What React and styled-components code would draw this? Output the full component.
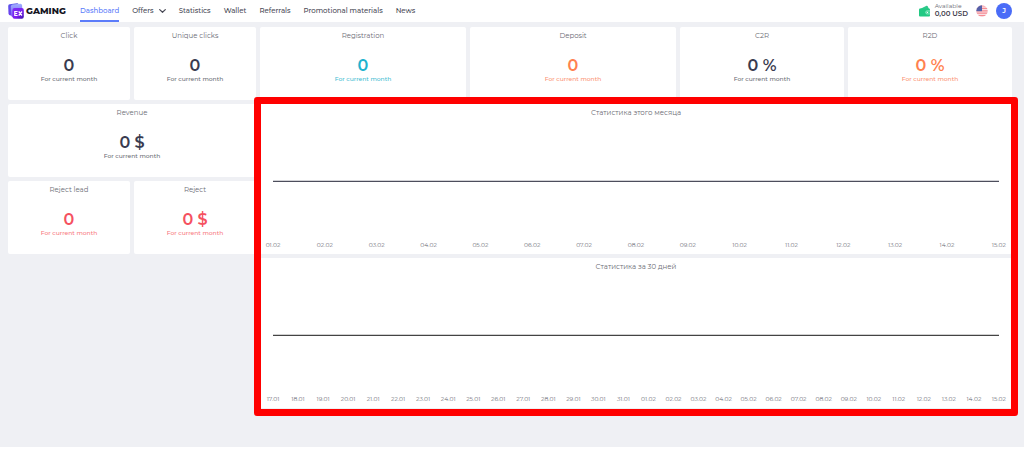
import React from "react";
import styled, { createGlobalStyle } from "styled-components";

const GlobalStyle = createGlobalStyle`
  * { box-sizing: border-box; }
  body {
    margin: 0;
    background: #fff;
    color: #6b6c75;
    font-family: Montserrat, Inter, "Noto Sans", sans-serif;
    font-size: 7px;
    line-height: 10px;
  }
`;

const Header = styled.header`
  display: flex;
  justify-content: space-between;
  height: 22px;
  padding: 0 12px 0 8px;
  background: #fff;
`;

const HeaderSide = styled.div`
  display: flex;
  align-items: center;
  gap: ${(p) => p.$gap}px;
`;

const Logo = styled.a`
  display: flex;
  align-items: center;
  gap: 2px;
  width: 59px;
  height: 20px;
  color: #15151f;
  font-size: 9px;
  font-weight: 800;
  text-decoration: none;
`;

const Nav = styled.nav`
  display: flex;
  gap: 13px;
  height: 22px;
`;

const NavLink = styled.a`
  display: flex;
  align-items: center;
  gap: 5px;
  padding-top: 1px;
  border-bottom: 2px solid ${(p) => (p.$active ? "#5c7cfa" : "transparent")};
  color: ${(p) => (p.$active ? "#5c7cfa" : "#4a4b57")};
  font-weight: 500;
  text-decoration: none;
  white-space: nowrap;
`;

const Balance = styled.div`
  display: flex;
  align-items: center;
  gap: 5px;
  height: 20px;
`;

const BalanceText = styled.div`
  display: flex;
  flex-direction: column;
  padding-bottom: 2px;
  font-size: 6px;
  line-height: 7px;
  white-space: nowrap;

  strong {
    color: #3f404c;
    font-size: 7px;
    font-weight: 600;
  }
`;

const RoundButton = styled.button`
  display: flex;
  align-items: center;
  justify-content: center;
  width: ${(p) => p.$size}px;
  height: ${(p) => p.$size}px;
  padding: 0;
  border: 0;
  border-radius: 50%;
  background: ${(p) => p.$background || "transparent"};
  color: #fff;
  font: inherit;
  font-weight: 600;
`;

const Main = styled.main`
  display: grid;
  grid-template-columns: repeat(24, minmax(0, 1fr));
  gap: 4px;
  align-items: start;
  padding: 5px 12px 38px 8px;
  background: #eff0f4;
`;

const Side = styled.div`
  display: grid;
  grid-column: span 6;
  grid-template-columns: repeat(6, minmax(0, 1fr));
  gap: 4px;
`;

const Card = styled.section`
  display: flex;
  flex-direction: column;
  align-items: center;
  grid-column: span ${(p) => p.$span};
  min-height: 73px;
  padding: 4px 0;
  border-radius: 2px;
  background: #fff;
`;

const Title = styled.h2`
  margin: 0;
  font-size: 7px;
  font-weight: 400;
  line-height: 10px;
`;

const Value = styled.div`
  margin-top: 16px;
  color: ${(p) => p.$color};
  font-size: 16px;
  font-weight: 600;
  line-height: 18px;
`;

const Period = styled.div`
  color: ${(p) => p.$color};
  font-size: 6px;
  font-weight: 500;
  line-height: 8px;
`;

const Charts = styled.div`
  position: relative;
  display: grid;
  grid-column: span 18;
  gap: 4px;
  padding-bottom: 1px;

  &::after {
    content: "";
    position: absolute;
    inset: -7px -6px;
    border: 7px solid #ff0000;
    border-radius: 3px;
    pointer-events: none;
  }
`;

const ChartCard = styled.section`
  display: flex;
  flex-direction: column;
  align-items: center;
  padding: 4px 1px;
  border-radius: 2px;
  background: #fff;
`;

const Plot = styled.div`
  align-self: stretch;
  height: 122px;
  padding: 0 12px;

  svg {
    display: block;
    width: 100%;
    height: 100%;
  }
`;

const Dates = styled.div`
  display: flex;
  justify-content: space-between;
  align-self: stretch;
  font-size: 6px;
`;

const DateLabel = styled.span`
  width: 24px;
  text-align: center;
`;

const tones = {
  dark: ["#3a3b50", "#6b6c75"],
  teal: ["#20b2ce", "#45bdd2"],
  orange: ["#ff814f", "#fb9273"],
  red: ["#f5515f", "#f77880"],
};

const summary = [
  { title: "Click", value: "0", span: 3, tone: "dark" },
  { title: "Unique clicks", value: "0", span: 3, tone: "dark" },
  { title: "Registration", value: "0", span: 5, tone: "teal" },
  { title: "Deposit", value: "0", span: 5, tone: "orange" },
  { title: "C2R", value: "0 %", span: 4, tone: "dark" },
  { title: "R2D", value: "0 %", span: 4, tone: "orange" },
];

const totals = [
  { title: "Revenue", value: "0 $", span: 6, tone: "dark" },
  { title: "Reject lead", value: "0", span: 3, tone: "red" },
  { title: "Reject", value: "0 $", span: 3, tone: "red" },
];

const pad = (n) => String(n).padStart(2, "0");
const february = Array.from({ length: 15 }, (_, i) => `${pad(i + 1)}.02`);
const january = Array.from({ length: 15 }, (_, i) => `${pad(i + 17)}.01`);

function Stat({ title, value, span, tone }) {
  const [strong, soft] = tones[tone];
  return (
    <Card $span={span}>
      <Title>{title}</Title>
      <Value $color={strong}>{value}</Value>
      <Period $color={soft}>For current month</Period>
    </Card>
  );
}

function Chart({ title, dates, color }) {
  return (
    <ChartCard>
      <Title>{title}</Title>
      <Plot>
        <svg viewBox="0 0 100 122" preserveAspectRatio="none" aria-hidden="true">
          <line x1="0" x2="100" y1="63.4" y2="63.4" stroke={color} strokeWidth="1.2" />
        </svg>
      </Plot>
      <Dates>
        {dates.map((d) => (
          <DateLabel key={d}>{d}</DateLabel>
        ))}
      </Dates>
    </ChartCard>
  );
}

function LogoMark() {
  return (
    <svg width="16" height="16" viewBox="0 0 16 16" aria-hidden="true">
      <defs>
        <linearGradient id="back" x1="0" y1="0" x2="0" y2="1">
          <stop offset="0" stopColor="#5a55e8" />
          <stop offset="1" stopColor="#6d3df0" />
        </linearGradient>
        <linearGradient id="middle" x1="0" y1="0" x2="0" y2="1">
          <stop offset="0" stopColor="#9fb0ff" />
          <stop offset="1" stopColor="#7a55f5" />
        </linearGradient>
        <linearGradient id="front" x1="0" y1="0" x2="1" y2="1">
          <stop offset="0" stopColor="#7d2df5" />
          <stop offset="0.6" stopColor="#7a1fee" />
          <stop offset="1" stopColor="#3512a4" />
        </linearGradient>
      </defs>
      <path d="M1.6 1.2 9 .2q1.4-.1 1.5 1.2L11 12 2.6 12.6Q.7 12.2.5 10.4L.2 3Q.2 1.5 1.6 1.2Z" fill="url(#back)" />
      <path d="M4.5 1.6 12.5.8q1.5 0 1.6 1.5L14.5 13 5 14Q3.2 13.8 3.1 12L2.8 3.5Q2.9 1.9 4.5 1.6Z" fill="url(#middle)" />
      <rect x="4.5" y="5" width="11.3" height="10.8" rx="2" fill="url(#front)" />
      <path d="M9.6 8.5H6.8v4h2.8M6.8 10.5h2.4M10.7 8.5l3.3 4M14 8.5l-3.3 4" stroke="#fff" strokeWidth="1.2" fill="none" />
    </svg>
  );
}

function Chevron() {
  return (
    <svg width="7" height="4" viewBox="0 0 7 4" aria-hidden="true">
      <path d="M.7.6 3.5 3.3 6.3.6" fill="none" stroke="#4a4b57" strokeWidth="1.2" strokeLinecap="round" strokeLinejoin="round" />
    </svg>
  );
}

function WalletIcon() {
  return (
    <svg width="11" height="12" viewBox="0 0 11 12" aria-hidden="true">
      <path d="M1 4 7.5.8q.8-.4 1.2.4L10 4Z" fill="#2fc98b" />
      <rect x="0" y="3.5" width="11" height="8" rx="1" fill="#22c983" />
      <path d="M11 5.8H8.2a1.6 1.6 0 0 0 0 3.2H11" fill="#3fd799" stroke="#b8f1d9" strokeWidth=".6" />
      <circle cx="8.4" cy="7.4" r=".6" fill="#fff" />
    </svg>
  );
}

function UsFlag() {
  return (
    <svg width="12" height="12" viewBox="0 0 12 12" aria-hidden="true">
      <clipPath id="disc">
        <circle cx="6" cy="6" r="5.7" />
      </clipPath>
      <g clipPath="url(#disc)">
        <rect width="12" height="12" fill="#fbdfe3" />
        <path d="M0 1h12M0 3.4h12M0 5.8h12M0 8.2h12M0 10.6h12" stroke="#f58c94" strokeWidth="1.2" />
        <rect width="6" height="6.2" fill="#5560a8" />
      </g>
    </svg>
  );
}

export default function App() {
  return (
    <>
      <GlobalStyle />
      <Header>
        <HeaderSide $gap={13}>
          <Logo href="#">
            <LogoMark />
            GAMING
          </Logo>
          <Nav>
            <NavLink href="#" $active>Dashboard</NavLink>
            <NavLink href="#">Offers <Chevron /></NavLink>
            <NavLink href="#">Statistics</NavLink>
            <NavLink href="#">Wallet</NavLink>
            <NavLink href="#">Referrals</NavLink>
            <NavLink href="#">Promotional materials</NavLink>
            <NavLink href="#">News</NavLink>
          </Nav>
        </HeaderSide>
        <HeaderSide $gap={8}>
          <Balance>
            <WalletIcon />
            <BalanceText>
              <span>Available</span>
              <strong>0,00 USD</strong>
            </BalanceText>
          </Balance>
          <RoundButton $size={12} aria-label="Language"><UsFlag /></RoundButton>
          <RoundButton $size={16} $background="#4a6cf7">J</RoundButton>
        </HeaderSide>
      </Header>
      <Main>
        {summary.map((s) => (
          <Stat key={s.title} {...s} />
        ))}
        <Side>
          {totals.map((s) => (
            <Stat key={s.title} {...s} />
          ))}
        </Side>
        <Charts>
          <Chart title="Статистика этого месяца" dates={february} color="#4d4e5c" />
          <Chart title="Статистика за 30 дней" dates={[...january, ...february]} color="#444" />
        </Charts>
      </Main>
    </>
  );
}
